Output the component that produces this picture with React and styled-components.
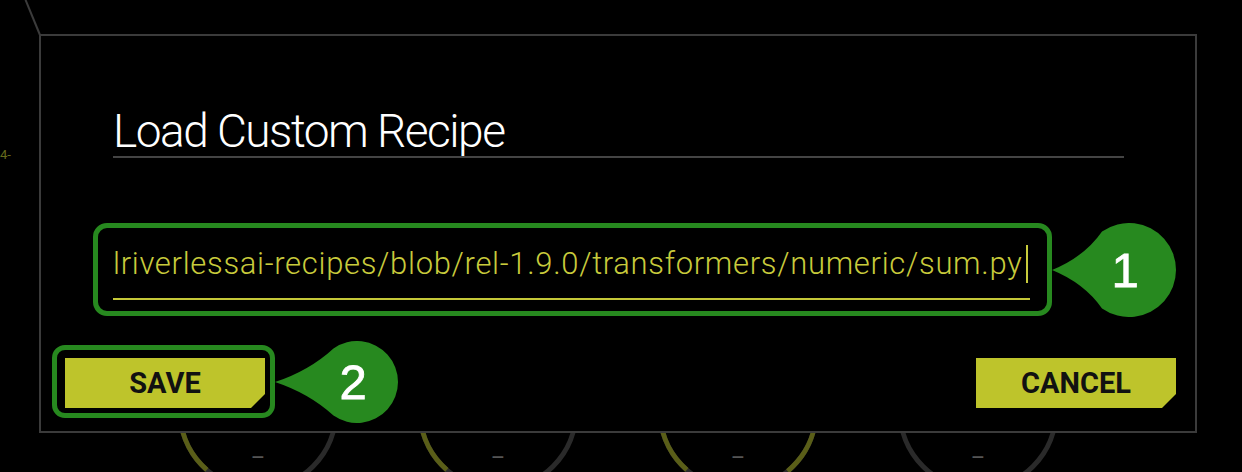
import React from "react";
import styled, { createGlobalStyle } from "styled-components";

const GlobalStyle = createGlobalStyle`
  html, body {
    margin: 0;
    padding: 0;
    background: #000;
  }
  * {
    box-sizing: border-box;
  }
`;

const GAUGE_R = 78;
const GAUGE_C = 2 * Math.PI * GAUGE_R;

// start/end angles in degrees, clockwise from 3 o'clock
const gauges = [
  { from: 131, to: 300 },
  { from: 131, to: 300 },
  { from: 131, to: 410 },
  { from: 0, to: 0 },
];

function Gauge({ from, to }) {
  const len = ((to - from) / 360) * GAUGE_C;
  return (
    <GaugeSvg width="166" height="166" viewBox="0 0 166 166">
      <circle cx="83" cy="83" r={GAUGE_R} fill="none" stroke="#2a2a2a" strokeWidth="5" />
      {len > 0 && (
        <circle
          cx="83"
          cy="83"
          r={GAUGE_R}
          fill="none"
          stroke="#5a5e18"
          strokeWidth="5"
          strokeDasharray={`${len} ${GAUGE_C}`}
          transform={`rotate(${from} 83 83)`}
        />
      )}
      <text x="83" y="137" textAnchor="middle" fill="#555" fontSize="22" fontFamily="Roboto, sans-serif">
        –
      </text>
    </GaugeSvg>
  );
}

function calloutPath(r, d) {
  const a = (235 * Math.PI) / 180;
  const px = d + r * Math.cos(a);
  const py = r + r * Math.sin(a);
  const qy = r * 0.72;
  const qx = d * 0.42;
  return `M0 ${r} Q${qx} ${qy} ${px} ${py} A${r} ${r} 0 1 1 ${px} ${2 * r - py} Q${qx} ${2 * r - qy} 0 ${r} Z`;
}

function Callout({ n, r, reach }) {
  const w = reach + r + 1;
  return (
    <CalloutBox>
      <svg width={w} height={2 * r} viewBox={`0 0 ${w} ${2 * r}`}>
        <path d={calloutPath(r, reach)} fill="#27891f" />
      </svg>
      <CalloutNum style={{ left: reach - 4 }}>{n}</CalloutNum>
    </CalloutBox>
  );
}

export default function App() {
  return (
    <>
      <GlobalStyle />
      <Page>
        <AxisLabel>4-</AxisLabel>
        <GaugeRow>
          {gauges.map((g, i) => (
            <Gauge key={i} {...g} />
          ))}
        </GaugeRow>

        <Dialog>
          <Header>
            <Title>Load Custom Recipe</Title>
          </Header>

          <FieldHighlight>
            <Field>
              <FieldText>lriverlessai-recipes/blob/rel-1.9.0/transformers/numeric/sum.py</FieldText>
              <Caret />
            </Field>
            <Callout n="1" r={47} reach={77} />
          </FieldHighlight>

          <Footer>
            <ButtonHighlight>
              <Button>SAVE</Button>
              <Callout n="2" r={41} reach={82} />
            </ButtonHighlight>
            <Button $raised>CANCEL</Button>
          </Footer>
        </Dialog>
      </Page>
    </>
  );
}

const Page = styled.div`
  position: relative;
  width: 1242px;
  height: 472px;
  overflow: hidden;
  background: #000;
  font-family: Roboto, "Noto Sans", sans-serif;
`;

const AxisLabel = styled.span`
  position: absolute;
  left: 0;
  top: 147px;
  font-size: 13px;
  color: #666a1c;
`;

const GaugeRow = styled.div`
  display: flex;
  gap: 74px;
  padding: 328px 0 0 175px;
`;

const GaugeSvg = styled.svg`
  flex: none;
  display: block;
`;

const Dialog = styled.div`
  position: absolute;
  left: 39px;
  top: 34px;
  width: 1158px;
  height: 399px;
  border: 2px solid #3b3b3b;
  background: #000;
  display: flex;
  flex-direction: column;

  &::before {
    content: "";
    position: absolute;
    left: -2px;
    bottom: calc(100% + 1px);
    width: 2px;
    height: 38px;
    background: #3b3b3b;
    transform-origin: bottom center;
    transform: rotate(-22.4deg);
  }
`;

const Header = styled.div`
  margin: 70px 71px 0 72px;
  border-bottom: 2px solid #444;
`;

const Title = styled.h1`
  margin: 0;
  font-size: 46px;
  font-weight: 300;
  line-height: 50px;
  color: #fff;
  letter-spacing: -1.5px;
`;

const FieldHighlight = styled.div`
  position: relative;
  align-self: flex-start;
  margin: 65px 0 0 52px;
  width: 959px;
  border: 5px solid #27891f;
  border-radius: 14px;
  padding: 16px 17px 11px 15px;
`;

const Field = styled.div`
  display: flex;
  align-items: center;
  height: 56px;
  padding-bottom: 14px;
  border-bottom: 2px solid #c5c838;
  white-space: nowrap;
  overflow: hidden;
`;

const FieldText = styled.span`
  font-size: 31px;
  font-weight: 300;
  line-height: 40px;
  letter-spacing: 0.68px;
  color: #c8cb3c;
`;

const Caret = styled.span`
  display: inline-block;
  width: 2px;
  height: 38px;
  margin-left: 3px;
  background: #c8cb3c;
`;

const CalloutBox = styled.div`
  position: absolute;
  left: calc(100% + 5px);
  top: 50%;
  transform: translateY(-50%);
  line-height: 0;
`;

const CalloutNum = styled.span`
  position: absolute;
  top: 50%;
  width: 0;
  display: flex;
  justify-content: center;
  line-height: 1;
  transform: translateY(-50%);
  font-family: "Liberation Sans", Arial, sans-serif;
  font-size: 49px;
  color: #fff;
  -webkit-text-stroke: 0.8px #fff;
`;

const Footer = styled.div`
  margin-top: auto;
  display: flex;
  justify-content: space-between;
  align-items: flex-end;
  padding: 0 19px 13px 11px;
`;

const ButtonHighlight = styled.div`
  position: relative;
  border: 5px solid #27891f;
  border-radius: 13px;
  padding: 8px 5px 5px 8px;
`;

const Button = styled.button`
  display: flex;
  align-items: center;
  justify-content: center;
  width: 200px;
  height: 50px;
  margin: 0 0 ${(p) => (p.$raised ? "10px" : "0")};
  padding: 0;
  border: none;
  background: #bec42b;
  clip-path: polygon(0 0, 100% 0, 100% calc(100% - 14px), calc(100% - 14px) 100%, 0 100%);
  font-family: Roboto, sans-serif;
  font-size: 29px;
  font-weight: 700;
  color: #111;
  cursor: pointer;
`;
